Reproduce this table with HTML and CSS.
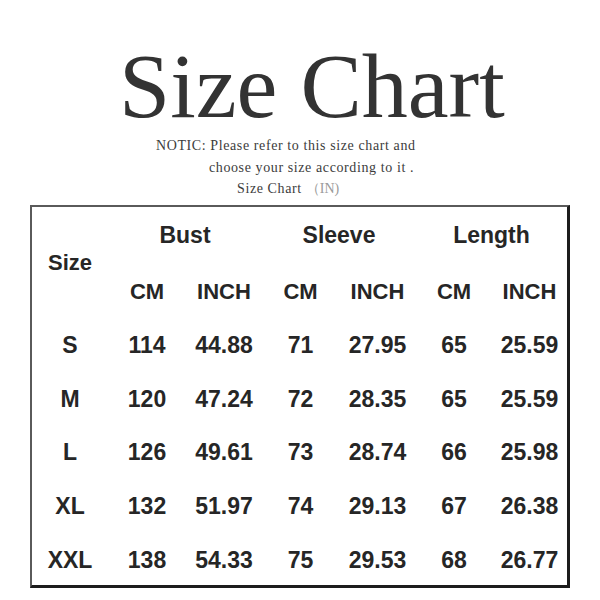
FILE: index.html
```html
<!DOCTYPE html>
<html>
<head>
<meta charset="utf-8">
<link rel="stylesheet" href="styles.css">
</head>
<body>
<div class="page">
  <h1 class="title">Size Chart</h1>
  <div class="notice">
    <div class="line l1">NOTIC: Please refer to this size chart and</div>
    <div class="line l2">choose your size according to it .</div>
    <div class="line l3">Size Chart <span class="unit">（IN)</span></div>
  </div>
  <div class="box">
    <div class="chart">
      <div class="cell h size">Size</div>
      <div class="cell h grp c2">Bust</div>
      <div class="cell h grp c4">Sleeve</div>
      <div class="cell h grp c6">Length</div>
      <div class="cell sub">CM</div><div class="cell sub">INCH</div>
      <div class="cell sub">CM</div><div class="cell sub">INCH</div>
      <div class="cell sub">CM</div><div class="cell sub">INCH</div>

      <div class="cell">S</div><div class="cell">114</div><div class="cell">44.88</div><div class="cell">71</div><div class="cell">27.95</div><div class="cell">65</div><div class="cell">25.59</div>
      <div class="cell">M</div><div class="cell">120</div><div class="cell">47.24</div><div class="cell">72</div><div class="cell">28.35</div><div class="cell">65</div><div class="cell">25.59</div>
      <div class="cell">L</div><div class="cell">126</div><div class="cell">49.61</div><div class="cell">73</div><div class="cell">28.74</div><div class="cell">66</div><div class="cell">25.98</div>
      <div class="cell">XL</div><div class="cell">132</div><div class="cell">51.97</div><div class="cell">74</div><div class="cell">29.13</div><div class="cell">67</div><div class="cell">26.38</div>
      <div class="cell">XXL</div><div class="cell">138</div><div class="cell">54.33</div><div class="cell">75</div><div class="cell">29.53</div><div class="cell">68</div><div class="cell">26.77</div>
    </div>
  </div>
</div>
</body>
</html>
```
FILE: styles.css
```css
html, body {
  margin: 0;
  padding: 0;
  background: #ffffff;
}

.page {
  width: 600px;
  height: 600px;
  padding-top: 40px;
  box-sizing: border-box;
}

.title {
  margin: 0;
  padding-left: 119px;
  height: 92px;
  font-family: "Liberation Serif", serif;
  font-weight: normal;
  font-size: 92px;
  line-height: 92px;
  color: #333333;
  white-space: nowrap;
}

.notice {
  margin-top: 3px;
  font-family: "Liberation Serif", serif;
  font-size: 14px;
  line-height: 21.5px;
  letter-spacing: 0.6px;
  color: #3c3c3c;
  white-space: nowrap;
}

.l1 { padding-left: 156px; }
.l2 { padding-left: 209px; }
.l3 { padding-left: 237px; }

.unit {
  color: #9a9a9a;
  letter-spacing: 0;
}

.box {
  margin-top: 5px;
  margin-left: 30px;
  width: 540px;
  height: 383px;
  box-sizing: border-box;
  border-style: solid;
  border-width: 2px 3px 3px 2px;
  border-color: #5a5a5a #1c1c1c #1c1c1c #5a5a5a;
}

.chart {
  display: grid;
  grid-template-columns: 76px 78px 76px 77px 77px 76px 75px;
  grid-template-rows: 58px 54px repeat(5, 53.7px);
  height: 378px;
  overflow: visible;
  font-family: "Liberation Sans", Arial, sans-serif;
  font-weight: bold;
  font-size: 23px;
  color: #262626;
}

.cell {
  display: flex;
  align-items: center;
  justify-content: center;
  white-space: nowrap;
}

.size {
  grid-row: 1 / span 2;
  grid-column: 1;
  font-size: 22px;
}

.grp { grid-row: 1; }
.c2 { grid-column: 2 / span 2; }
.c4 { grid-column: 4 / span 2; }
.c6 { grid-column: 6 / span 2; }

.sub {
  font-size: 22px;
}
```
